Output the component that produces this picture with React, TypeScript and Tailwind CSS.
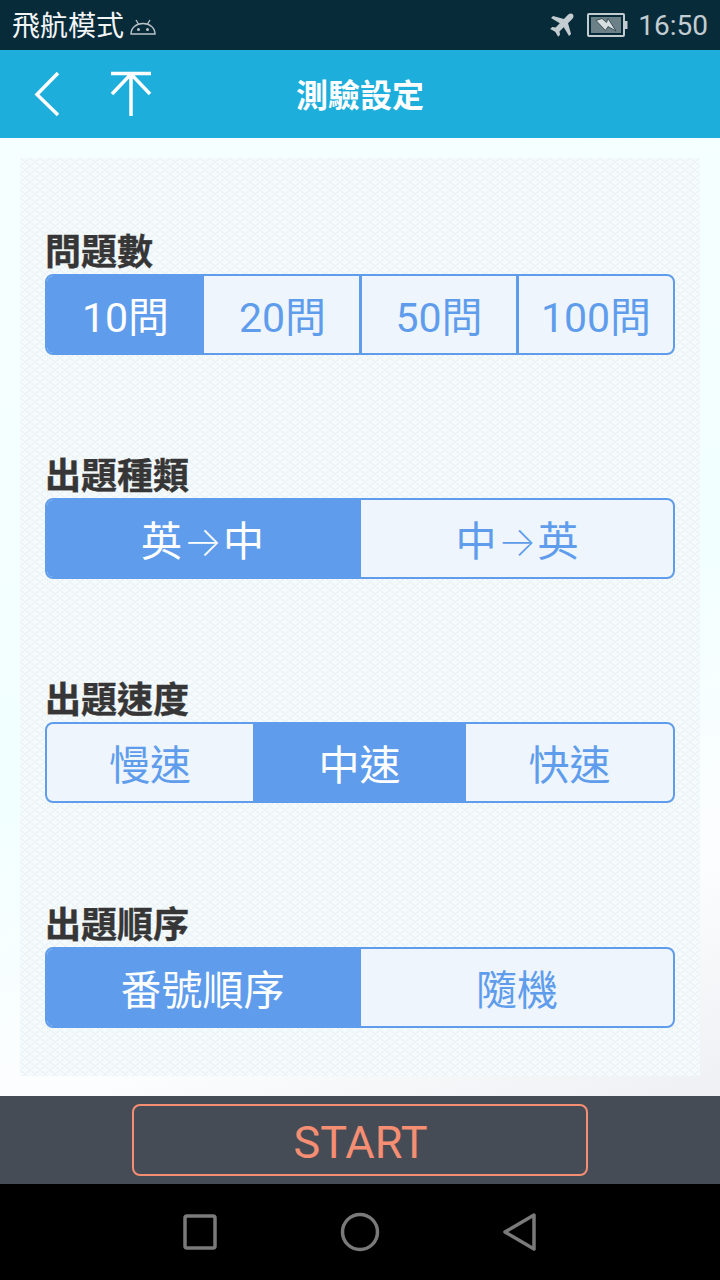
import { Fragment } from "react";

const CJK = "font-['Roboto','Noto_Sans_CJK_TC','Noto_Sans_CJK_SC',sans-serif]";

type Option = { label: string; width: string; active?: boolean };

const groups: { title: string; top: string; options: Option[] }[] = [
  {
    title: "問題數",
    top: "mt-[69px]",
    options: [
      { label: "10問", width: "w-[157px]", active: true },
      { label: "20問", width: "w-[155px] pl-[2px]" },
      { label: "50問", width: "w-[154px]" },
      { label: "100問", width: "flex-1" },
    ],
  },
  {
    title: "出題種類",
    top: "mt-[96px]",
    options: [
      { label: "英→中", width: "w-[314px] pr-[3px]", active: true },
      { label: "中→英", width: "flex-1" },
    ],
  },
  {
    title: "出題速度",
    top: "mt-[96px]",
    options: [
      { label: "慢速", width: "w-[206px]" },
      { label: "中速", width: "w-[213px]", active: true },
      { label: "快速", width: "flex-1" },
    ],
  },
  {
    title: "出題順序",
    top: "mt-[97px]",
    options: [
      { label: "番號順序", width: "w-[314px] pr-[3px]", active: true },
      { label: "隨機", width: "flex-1" },
    ],
  },
];

function StatusBar() {
  return (
    <div className="flex h-[50px] shrink-0 items-center justify-between bg-[#082b3a] pr-3 pl-3">
      <div className="flex items-center gap-[6px]">
        <span className="pt-[4px] text-[28px] leading-none text-[#f2f5f6]">飛航模式</span>
        <svg width="26" height="16" viewBox="0 0 26 16" fill="none" stroke="#b9c3c7" strokeWidth="1.4" className="mt-[3px]">
          <path d="M1 15h24c0-6-5-10.500-12-10.500S1 9 1 15z" />
          <path d="M6 1l2.500 4M20 1l-2.500 4" />
          <circle cx="8.500" cy="10.500" r="0.800" fill="#b9c3c7" />
          <circle cx="17.500" cy="10.500" r="0.800" fill="#b9c3c7" />
        </svg>
      </div>
      <div className="flex items-center">
        <svg width="27" height="27" viewBox="0 0 24 24" fill="#c3ccd0" className="mr-[12px]">
          <path d="M22 2c-1.100-1.100-3-.7-4 .3l-3.900 3.900L4.500 3.500 2.700 5.300l7.800 4.700-3.800 3.800-3-.5-1.700 1.700 4.400 2.600 2.600 4.400 1.700-1.700-.5-3 3.800-3.800 4.700 7.800 1.800-1.800-2.700-9.600 3.900-3.900c1-1 1.400-2.900.3-4z" />
        </svg>
        <svg width="41" height="25" viewBox="0 0 41 25" fill="none" className="mr-[10px]">
          <rect x="1" y="1" width="36" height="22" rx="1" stroke="#c3ccd0" strokeWidth="2" />
          <rect x="4" y="4" width="30" height="16" fill="#6b8087" />
          <path d="M38 8h2.500v8H38z" fill="#c3ccd0" />
          <path d="M9 7.500l6-2 4.500 4 1.500-4 8 12.500-8-4.500-2.500 4z" fill="#d8dfe1" stroke="#2b3c44" strokeWidth="0.800" />
        </svg>
        <span className="pt-[2px] font-['Roboto',sans-serif] text-[28px] leading-none text-[#c3ccd0]">16:50</span>
      </div>
    </div>
  );
}

function Header() {
  return (
    <div className="relative flex h-[88px] shrink-0 items-center bg-[#1eaedb]">
      <svg width="130" height="88" viewBox="0 0 130 88" fill="none" stroke="#ffffff" strokeWidth="3.500" className="ml-[30px]">
        <path d="M28 23L7 44.500 28 65" />
        <path d="M81 23.500h40M101 24v42M82 44l19-20 19 20" />
      </svg>
      <span className="absolute inset-x-0 pt-[4px] text-center text-[32px] font-bold text-white">測驗設定</span>
    </div>
  );
}

// the arrow in the label comes from a thinner font than the CJK text around it
function OptionLabel({ label }: { label: string }) {
  const parts = label.split("→");
  if (parts.length < 2) return <>{label}</>;
  return (
    <>
      {parts[0]}
      <span className="inline-block w-[41px] text-center font-['Inter',sans-serif] font-extralight">→</span>
      {parts[1]}
    </>
  );
}

function Segmented({ options }: { options: Option[] }) {
  return (
    <div className="flex h-[81px] overflow-hidden rounded-[8px] border-2 border-[#5f9dec] bg-[#eef5fd]">
      {options.map((o, i) => (
        <Fragment key={o.label}>
          {i > 0 && !o.active && !options[i - 1].active && <div className="w-[3px] bg-[#5f9dec]" />}
          <div
            className={
              o.width +
              " flex items-center justify-center pt-[7px] text-[41px] leading-none " +
              (o.active ? "bg-[#5f9dec] text-white" : "text-[#5f9dec]")
            }
          >
            <span>
              <OptionLabel label={o.label} />
            </span>
          </div>
        </Fragment>
      ))}
    </div>
  );
}

export default function App() {
  return (
    <div className={"flex h-[1280px] w-[720px] flex-col overflow-hidden " + CJK}>
      <StatusBar />
      <Header />
      <div className="min-h-0 flex-1 bg-[linear-gradient(160deg,#f6ffff_0%,#f2ffff_55%,#fcfdfe_80%,#eff0f3_100%)] p-5">
        <div className="flex h-full flex-col bg-[#f5fafc] bg-[linear-gradient(to_top_right,transparent_46%,#ebf2f6_46%,#ebf2f6_54%,transparent_54%),linear-gradient(to_top_left,transparent_46%,#ebf2f6_46%,#ebf2f6_54%,transparent_54%)] bg-[size:10px_8px] px-[25px]">
          {groups.map((g) => (
            <div key={g.title} className={g.top}>
              <div className="h-[47px] text-[36px] leading-[53px] font-bold text-[#363636] [-webkit-text-stroke:0.4px_#363636]">
                {g.title}
              </div>
              <Segmented options={g.options} />
            </div>
          ))}
        </div>
      </div>
      <div className="flex h-[88px] shrink-0 items-center justify-center bg-[#464c56]">
        <div className="flex h-[72px] w-[456px] items-center justify-center rounded-[8px] border-2 border-[#f58e72] pt-[5px] pl-[1px] text-[45px] leading-none text-[#f58e72]">
          START
        </div>
      </div>
      <div className="flex h-[96px] shrink-0 items-center justify-between bg-black pr-[180px] pl-[180px]">
        <svg width="40" height="40" viewBox="0 0 40 40" fill="none" stroke="#7a7a7a" strokeWidth="3.500">
          <rect x="5" y="4" width="30" height="32" rx="2" />
        </svg>
        <svg width="40" height="40" viewBox="0 0 40 40" fill="none" stroke="#7a7a7a" strokeWidth="3.500">
          <circle cx="20" cy="20" r="17.500" />
        </svg>
        <svg width="40" height="40" viewBox="0 0 40 40" fill="none" stroke="#7a7a7a" strokeWidth="3.500" strokeLinejoin="round">
          <path d="M34 3L5 20l29 17z" />
        </svg>
      </div>
    </div>
  );
}
